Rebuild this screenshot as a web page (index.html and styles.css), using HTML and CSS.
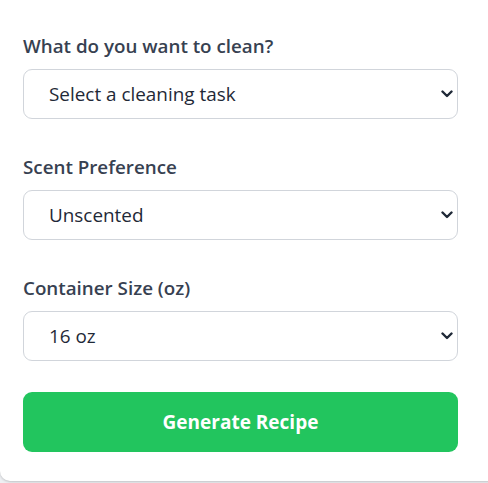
FILE: index.html
```html
<!DOCTYPE html>
<html lang="en">
<head>
<meta charset="utf-8">
<title>Cleaning Recipe</title>
<link rel="stylesheet" href="styles.css">
</head>
<body>
<div class="card">
  <div class="field">
    <label class="label" for="task">What do you want to clean?</label>
    <div class="select-wrap">
      <select id="task" class="select">
        <option>Select a cleaning task</option>
      </select>
      <svg class="chev" width="12" height="8" viewBox="0 0 12 8"><path d="M1.5 1.5 L6 6 L10.5 1.5" fill="none" stroke="#1f2937" stroke-width="2.4" stroke-linecap="round" stroke-linejoin="round"/></svg>
    </div>
  </div>
  <div class="field">
    <label class="label" for="scent">Scent Preference</label>
    <div class="select-wrap">
      <select id="scent" class="select">
        <option>Unscented</option>
      </select>
      <svg class="chev" width="12" height="8" viewBox="0 0 12 8"><path d="M1.5 1.5 L6 6 L10.5 1.5" fill="none" stroke="#1f2937" stroke-width="2.4" stroke-linecap="round" stroke-linejoin="round"/></svg>
    </div>
  </div>
  <div class="field">
    <label class="label" for="size">Container Size (oz)</label>
    <div class="select-wrap">
      <select id="size" class="select">
        <option>16 oz</option>
      </select>
      <svg class="chev" width="12" height="8" viewBox="0 0 12 8"><path d="M1.5 1.5 L6 6 L10.5 1.5" fill="none" stroke="#1f2937" stroke-width="2.4" stroke-linecap="round" stroke-linejoin="round"/></svg>
    </div>
  </div>
  <button class="btn" type="button">Generate Recipe</button>
</div>
</body>
</html>
```

FILE: styles.css
```css
html, body {
  margin: 0;
  padding: 0;
  overflow: hidden;
}
body {
  background: #eef0f3;
  font-family: "Open Sans", "Noto Sans", sans-serif;
  height: 483px;
}
.card {
  background: #ffffff;
  width: calc(100% + 20px);
  box-sizing: border-box;
  padding: 33px 0 29px 23px;
  border-radius: 0 0 10px 10px;
  box-shadow: 0 1px 3px rgba(0,0,0,0.12), 0 1px 2px rgba(0,0,0,0.08);
  display: flex;
  flex-direction: column;
}
.field {
  display: flex;
  flex-direction: column;
  width: 435px;
  margin-bottom: 35px;
}
.field:nth-child(3) {
  margin-bottom: 31px;
}
.label {
  font-size: 18.8px;
  font-weight: 600;
  line-height: 26px;
  color: #374151;
  margin-bottom: 10px;
}
.select-wrap {
  position: relative;
}
.select {
  appearance: none;
  -webkit-appearance: none;
  width: 100%;
  height: 50px;
  box-sizing: border-box;
  border: 1px solid #d1d5db;
  border-radius: 9px;
  background: #ffffff;
  padding: 0 40px 0 25px;
  font-family: "Open Sans", "Noto Sans", sans-serif;
  font-size: 18.9px;
  color: #1f2937;
  outline: none;
}
.chev {
  position: absolute;
  right: 5px;
  top: 21px;
  pointer-events: none;
}
.btn {
  width: 435px;
  height: 60px;
  border: none;
  border-radius: 9px;
  background: #22c55e;
  color: #ffffff;
  font-family: "Open Sans", "Noto Sans", sans-serif;
  font-size: 19px;
  font-weight: 700;
  cursor: pointer;
}
```
